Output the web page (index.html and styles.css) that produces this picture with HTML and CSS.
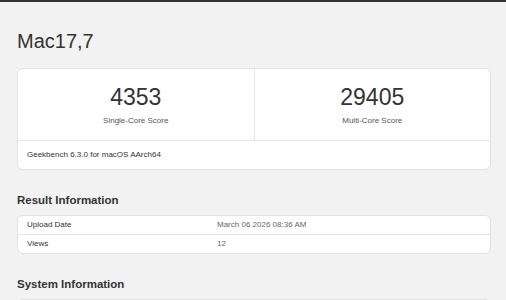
FILE: index.html
```html
<!DOCTYPE html>
<html lang="en">
<head>
    <meta charset="UTF-8">
    <meta name="viewport" content="width=device-width, initial-scale=1.0">
    <title>Mac17,7 - Geekbench</title>
    <link rel="stylesheet" href="styles.css">
</head>
<body>
    <div class="topbar"></div>
    <div class="page">
        <h1 class="device-name">Mac17,7</h1>

        <div class="card score-card">
            <div class="score-row">
                <div class="score-cell">
                    <div class="score">4353</div>
                    <div class="score-label">Single-Core Score</div>
                </div>
                <div class="score-cell">
                    <div class="score">29405</div>
                    <div class="score-label">Multi-Core Score</div>
                </div>
            </div>
            <div class="score-footer">Geekbench 6.3.0 for macOS AArch64</div>
        </div>

        <h2 class="section-title">Result Information</h2>
        <div class="card info-table">
            <div class="info-row">
                <div class="info-name">Upload Date</div>
                <div class="info-value">March 06 2026 08:36 AM</div>
            </div>
            <div class="info-row">
                <div class="info-name">Views</div>
                <div class="info-value">12</div>
            </div>
        </div>

        <h2 class="section-title">System Information</h2>
        <div class="card info-table system-table"></div>
    </div>
</body>
</html>
```

FILE: styles.css
```css
body {
    font-family: 'Liberation Sans', Arial, sans-serif;
    background-color: #f2f2f2;
    color: #333;
    margin: 0;
    padding: 0;
}
.topbar {
    height: 2px;
    background-color: #333;
}
.page {
    padding: 27px 15px 0 17px;
}
.device-name {
    font-size: 20px;
    line-height: 24px;
    font-weight: normal;
    margin: 0 0 15px;
    color: #333;
}
.card {
    background-color: #fff;
    border: 1px solid #e2e2e2;
    border-radius: 6px;
    overflow: hidden;
}
.score-row {
    display: flex;
    border-bottom: 1px solid #e6e6e6;
}
.score-cell {
    flex: 1;
    text-align: center;
    padding: 14px 0 13px;
}
.score-cell + .score-cell {
    border-left: 1px solid #e6e6e6;
}
.score {
    font-size: 23px;
    line-height: 28px;
    color: #333;
}
.score-label {
    font-size: 8px;
    line-height: 12px;
    margin-top: 4px;
    color: #555;
}
.score-footer {
    font-size: 8px;
    line-height: 12px;
    padding: 8px 9px;
    color: #333;
}
.section-title {
    font-size: 11.5px;
    line-height: 16px;
    font-weight: bold;
    margin: 22px 0 7px;
    color: #333;
}
.info-row {
    display: flex;
    font-size: 8px;
    line-height: 18px;
}
.info-row + .info-row {
    border-top: 1px solid #e6e6e6;
}
.info-name {
    width: 190px;
    padding-left: 9px;
    color: #333;
}
.info-value {
    flex: 1;
    color: #666;
}
.system-table {
    height: 30px;
}
```
